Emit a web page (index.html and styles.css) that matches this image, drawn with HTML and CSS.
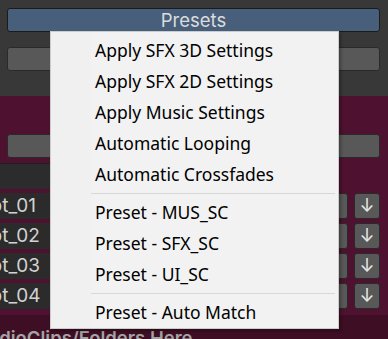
FILE: index.html
```html
<!DOCTYPE html>
<html lang="en">
<head>
    <meta charset="UTF-8">
    <meta name="viewport" content="width=device-width, initial-scale=1.0">
    <title>Presets Menu</title>
    <link rel="stylesheet" href="styles.css">
</head>
<body>
    <div class="inspector">
        <div class="top-section">
            <button class="unity-button presets-button">Presets</button>
            <button class="unity-button"></button>
        </div>
        <div class="clip-section">
            <button class="unity-button"></button>
            <div class="toolbar"></div>
            <div class="slot-list">
                <div class="slot-row">
                    <div class="slot-field">Slot_01</div>
                    <button class="unity-button small-button"></button>
                    <button class="unity-button arrow-button">&#8595;</button>
                </div>
                <div class="slot-row">
                    <div class="slot-field">Slot_02</div>
                    <button class="unity-button small-button"></button>
                    <button class="unity-button arrow-button">&#8595;</button>
                </div>
                <div class="slot-row">
                    <div class="slot-field">Slot_03</div>
                    <button class="unity-button small-button"></button>
                    <button class="unity-button arrow-button">&#8595;</button>
                </div>
                <div class="slot-row">
                    <div class="slot-field">Slot_04</div>
                    <button class="unity-button small-button"></button>
                    <button class="unity-button arrow-button">&#8595;</button>
                </div>
            </div>
            <div class="drop-zone">Drag AudioClips/Folders Here</div>
        </div>
    </div>

    <div class="context-menu">
        <div class="menu-item">Apply SFX 3D Settings</div>
        <div class="menu-item">Apply SFX 2D Settings</div>
        <div class="menu-item">Apply Music Settings</div>
        <div class="menu-item">Automatic Looping</div>
        <div class="menu-item">Automatic Crossfades</div>
        <div class="menu-separator"></div>
        <div class="menu-item">Preset - MUS_SC</div>
        <div class="menu-item">Preset - SFX_SC</div>
        <div class="menu-item">Preset - UI_SC</div>
        <div class="menu-separator"></div>
        <div class="menu-item">Preset - Auto Match</div>
    </div>
</body>
</html>
```

FILE: styles.css
```css
body, html {
    margin: 0;
    padding: 0;
    width: 388px;
    height: 339px;
    overflow: hidden;
    background-color: #383838;
    font-family: Inter, "Noto Sans", sans-serif;
}
.inspector {
    display: flex;
    flex-direction: column;
}
.top-section {
    height: 96px;
    box-sizing: border-box;
    padding: 8px 8px 0 7px;
    display: flex;
    flex-direction: column;
    gap: 15px;
}
.unity-button {
    height: 24px;
    background-color: #585858;
    border: 1px solid #2a2a2a;
    border-radius: 3px;
    color: #dcdcdc;
    font-family: Inter, "Noto Sans", sans-serif;
    padding: 0;
    box-sizing: border-box;
}
.presets-button {
    background-color: #475f7b;
    border-color: #1b1b1b;
    font-size: 18.5px;
    line-height: 22px;
}
.clip-section {
    background-color: #4e1230;
    display: flex;
    flex-direction: column;
    padding-top: 38px;
}
.clip-section > .unity-button {
    margin: 0 8px 0 7px;
}
.toolbar {
    margin-top: 5px;
    height: 26px;
    width: 220px;
    background-color: #2c2c2c;
    border-top: 1px solid #1f1f1f;
    box-sizing: border-box;
}
.slot-list {
    display: flex;
    flex-direction: column;
    gap: 4px;
    padding-top: 4px;
}
.slot-row {
    display: flex;
    align-items: center;
    height: 26px;
    gap: 6px;
    padding-right: 8px;
}
.slot-field {
    flex: 1;
    height: 26px;
    margin-left: -30px;
    background-color: #2b2b2b;
    border-radius: 3px;
    color: #d2d2d2;
    font-size: 19px;
    line-height: 26px;
    padding-left: 4px;
    white-space: nowrap;
}
.small-button {
    width: 30px;
    height: 26px;
}
.arrow-button {
    width: 26px;
    height: 26px;
    font-size: 18px;
    line-height: 22px;
    color: #e6e6e6;
}
.drop-zone {
    margin-top: 6px;
    height: 40px;
    background-color: #3e0e24;
    color: #a3a3a3;
    font-size: 18.5px;
    font-weight: 600;
    line-height: 26px;
    padding-top: 10px;
    margin-left: -73px;
    white-space: nowrap;
}
.context-menu {
    position: absolute;
    left: 50px;
    top: 31px;
    width: 289px;
    height: 298px;
    box-sizing: border-box;
    padding: 3px 3px 2px 0;
    background: linear-gradient(to right, #f0f0f0 40px, #f2f2f2 40px);
    border: 1px solid #cccccc;
    box-shadow: 2px 2px 3px rgba(0, 0, 0, 0.3);
    font-family: "Noto Sans", "Open Sans", sans-serif;
    font-size: 17.5px;
    color: #000;
}
.menu-item {
    height: 31px;
    line-height: 31px;
    padding-left: 44px;
    white-space: nowrap;
}
.menu-separator {
    height: 1px;
    margin: 3px 0 3px 40px;
    background-color: #d7d7d7;
}
```
